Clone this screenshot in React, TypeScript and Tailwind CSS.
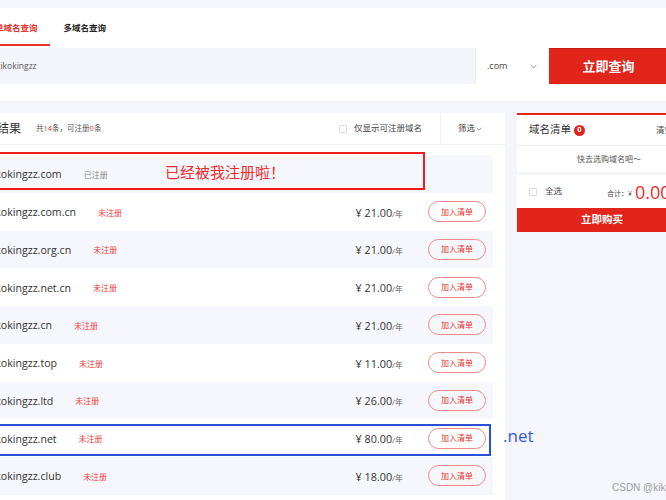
import React from "react";

const rows = [
  { name: "kikokingzz.com", status: "已注册", price: null as string | null },
  { name: "kikokingzz.com.cn", status: "未注册", price: "21.00" },
  { name: "kikokingzz.org.cn", status: "未注册", price: "21.00" },
  { name: "kikokingzz.net.cn", status: "未注册", price: "21.00" },
  { name: "kikokingzz.cn", status: "未注册", price: "21.00" },
  { name: "kikokingzz.top", status: "未注册", price: "11.00" },
  { name: "kikokingzz.ltd", status: "未注册", price: "26.00" },
  { name: "kikokingzz.net", status: "未注册", price: "80.00" },
  { name: "kikokingzz.club", status: "未注册", price: "18.00" },
];

function Chevron({ className }: { className?: string }) {
  return (
    <svg className={className} viewBox="0 0 10 6" fill="none" stroke="currentColor" strokeWidth="1.1">
      <path d="M1 1l4 4 4-4" />
    </svg>
  );
}

function Box() {
  return <span className="inline-block w-[8px] h-[8px] border border-[#dcdcdc] bg-white rounded-[1px] shrink-0" />;
}

export default function App() {
  return (
    <div
      className="relative w-[666px] h-[500px] overflow-hidden bg-[#f5f6fb] text-[#333]"
      style={{ fontFamily: '"Open Sans", "Noto Sans CJK SC", sans-serif' }}
    >
      <div className="h-[8px]" />
      {/* top white block */}
      <div className="bg-white w-[666px]">
        <div className="h-[40px] flex items-stretch">
          <div className="relative ml-[-17px] px-[12px] flex items-center text-[#e5322d] text-[8.5px] font-bold">
            单域名查询
            <span className="absolute left-0 right-0 bottom-[2px] h-[2px] bg-[#e5322d]" />
          </div>
          <div className="ml-[2px] px-[12px] flex items-center text-[#222] text-[8.5px] font-bold">多域名查询</div>
        </div>
        <div className="h-[36px] flex">
          <div className="w-[475px] bg-[#f4f5fb] flex items-center overflow-hidden">
            <span className="ml-[-4px] text-[8.5px] text-[#555]">kikokingzz</span>
          </div>
          <div className="w-[74px] border-l border-[#eee] flex items-center justify-between pl-[11px] pr-[12px] text-[9px] text-[#444]">
            <span>.com</span>
            <Chevron className="w-[7px] h-[5px] text-[#777]" />
          </div>
          <div className="flex-1 bg-[#e1251b] border-t border-[#c81e15] flex items-center justify-center text-white text-[13px] font-bold">
            <span className="ml-[2px]">立即查询</span>
          </div>
        </div>
        <div className="h-[17px]" />
      </div>
      <div className="h-[12px]" />

      <div className="flex gap-[12px]">
        {/* results */}
        <div className="relative w-[505px] shrink-0 bg-white pb-[10px]">
          <div className="h-[32px] flex items-center border-b border-[#f1f1f4]">
            <span className="ml-[-27px] text-[12px] text-[#333]">查询结果</span>
            <span className="ml-[15px] text-[7.5px] text-[#555] mt-[1px]">
              共<span className="text-[#e5322d]">14</span>条，可注册<span className="text-[#e5322d]">0</span>条
            </span>
            <div className="flex-1" />
            <Box />
            <span className="ml-[7px] text-[8.5px] text-[#444]">仅显示可注册域名</span>
            <div className="ml-[18px] self-stretch w-px bg-[#f0f0f0]" />
            <span className="ml-[17px] text-[8.5px] text-[#444] flex items-center">
              筛选
              <Chevron className="w-[6px] h-[4px] ml-[1px] text-[#555]" />
            </span>
            <div className="w-[23px]" />
          </div>
          <div className="h-[10px]" />
          <div className="w-[493px]">
            {rows.map((r, i) => (
              <div
                key={r.name}
                className={`h-[37.75px] flex items-center overflow-hidden ${i % 2 === 0 ? "bg-[#f6f7fc]" : "bg-white"}`}
              >
                <span className="ml-[-13px] mt-[3px] text-[10.6px] text-[#333] whitespace-nowrap">{r.name}</span>
                <span
                  className={`ml-[22px] mt-[2px] text-[8px] whitespace-nowrap ${r.price ? "text-[#f03e3e]" : "text-[#888]"}`}
                >
                  {r.status}
                </span>
                <div className="flex-1" />
                {r.price && (
                  <>
                    <span className="mt-[2px] text-[10.8px] text-[#333] whitespace-nowrap">
                      ¥ {r.price}
                      <span className="text-[8px] text-[#666]">/年</span>
                    </span>
                    <span className="ml-[25px] mr-[7px] w-[58px] h-[21px] rounded-full border border-[#f08a86] text-[#e5322d] text-[8px] flex items-center justify-center">
                      加入清单
                    </span>
                  </>
                )}
              </div>
            ))}
          </div>

          {/* annotations */}
          <div className="absolute left-[-4px] top-[39px] w-[429px] h-[38px] border-2 border-[#f01c1c] pointer-events-none" />
          <div className="absolute left-[165px] top-[52px] text-[15px] text-[#f22a2a] leading-none whitespace-nowrap">
            已经被我注册啦！
          </div>
          <div className="absolute left-[-4px] top-[311px] w-[495px] h-[32px] border-2 border-[#2b4fd6] pointer-events-none" />
        </div>

        {/* cart */}
        <div className="w-[170px] shrink-0 self-start">
          <div className="bg-white border-t-2 border-[#e1251b]">
            <div className="h-[31px] flex items-center px-[12px] border-b border-[#f1f1f4]">
              <span className="text-[10.5px] text-[#333]">域名清单</span>
              <span className="ml-[3px] w-[11px] h-[11px] rounded-full bg-[#e1251b] text-white text-[7.5px] font-bold flex items-center justify-center leading-none">
                0
              </span>
              <div className="flex-1" />
              <span className="mr-[2px] text-[8.5px] text-[#444]">清空</span>
            </div>
            <div className="h-[29px] flex items-center justify-center pl-[14px] text-[8px] text-[#555] border-b-[3px] border-[#f5f6fb]">
              快去选购域名吧～
            </div>
            <div className="h-[33px] flex items-center px-[12px]">
              <Box />
              <span className="ml-[8px] text-[8.5px] text-[#444]">全选</span>
              <span className="ml-[45px] mt-[5px] text-[7px] text-[#444]">合计：¥</span>
              <span className="ml-[3px] text-[18px] text-[#f22a2a] leading-none">0.00</span>
            </div>
            <div className="h-[24px] bg-[#e1251b] flex items-center justify-center text-white text-[10.5px] font-bold">
              立即购买
            </div>
          </div>
        </div>
      </div>

      <div className="absolute left-[503px] top-[427px] text-[17px] text-[#3558d6] leading-none">.net</div>
      <div className="absolute left-[612px] top-[480px] text-[10px] text-[#a0a0a0] whitespace-nowrap" style={{ fontFamily: '"Liberation Sans", sans-serif' }}>
        CSDN @kikokingzz
      </div>
    </div>
  );
}
